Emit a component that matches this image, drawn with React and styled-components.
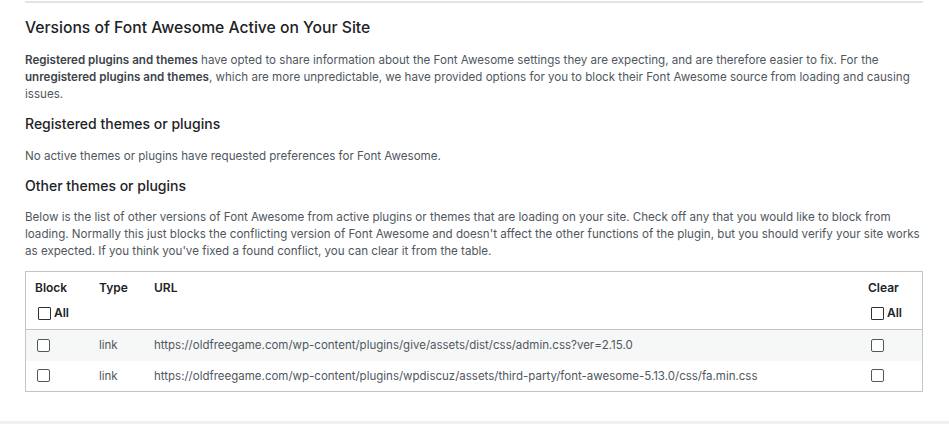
import React from "react";
import styled, { createGlobalStyle } from "styled-components";

const Global = createGlobalStyle`
  html, body { margin: 0; padding: 0; background: #fff; }
  body { font-family: Inter, "Noto Sans", Roboto, sans-serif; color: #50575e; -webkit-font-smoothing: antialiased; }
`;

const Page = styled.div`
  width: 949px;
  height: 424px;
  display: flex;
  flex-direction: column;
  overflow: hidden;
`;

const Section = styled.section`
  height: 421px;
  padding: 0 26px 0 25px;
  box-sizing: border-box;
`;

const Rule = styled.hr`
  margin: 1px 0 0;
  border: 0;
  border-top: 2px solid #e2e4e7;
`;

const Title = styled.h2`
  margin: 13px 0 0;
  font-size: 15.7px;
  line-height: 24px;
  font-weight: 500;
  color: #1d2327;
`;

const Sub = styled.h3`
  margin: ${(p) => p.$mt}px 0 0;
  font-size: 14px;
  line-height: 20px;
  font-weight: 500;
  color: #1d2327;
`;

const Para = styled.p`
  margin: ${(p) => p.$mt}px 0 0;
  font-size: 11.6px;
  line-height: 17px;
  color: #50575e;
  b { font-weight: 600; color: #3c434a; }
`;

const Table = styled.table`
  margin-top: 11px;
  width: 100%;
  border-collapse: collapse;
  border: 1px solid #c3c4c7;
  font-size: 11px;
`;

const Th = styled.th`
  text-align: left;
  vertical-align: top;
  padding: 8px 10px 8px ${(p) => p.$pl || 9}px;
  font-size: 12px;
  font-weight: 600;
  color: #1d2327;
  width: ${(p) => p.$w || "auto"};
  line-height: 16px;
  border-bottom: 1px solid #c3c4c7;
`;

const HeadLabel = styled.div`
  height: 16px;
`;

const AllLabel = styled.label`
  display: flex;
  align-items: center;
  gap: 3px;
  margin-top: 9px;
  padding-left: 3px;
  height: 16px;
`;

const Box = styled.span`
  display: inline-block;
  width: 13px;
  height: 13px;
  box-sizing: border-box;
  border: 1.5px solid ${(p) => (p.$dark ? "#2c3338" : "#50575e")};
  border-radius: ${(p) => (p.$dark ? "1px" : "2px")};
  background: #fff;
`;

const Row = styled.tr`
  background: ${(p) => (p.$alt ? "#f6f7f7" : "#fff")};
`;

const Td = styled.td`
  height: 31px;
  padding: 0 10px 0 9px;
  vertical-align: middle;
  color: #50575e;
  font-size: 11.5px;
  line-height: 14px;
  box-sizing: border-box;
`;

const BoxCell = styled(Td)`
  padding-left: ${(p) => p.$pl}px;
  line-height: 0;
`;

const Footer = styled.div`
  flex: 1;
  background: #f0f0f1;
`;

const rows = [
  "https://oldfreegame.com/wp-content/plugins/give/assets/dist/css/admin.css?ver=2.15.0",
  "https://oldfreegame.com/wp-content/plugins/wpdiscuz/assets/third-party/font-awesome-5.13.0/css/fa.min.css",
];

export default function App() {
  return (
    <Page>
      <Global />
      <Section>
        <Rule />
        <Title>Versions of Font Awesome Active on Your Site</Title>
        <Para $mt={12}>
          <b>Registered plugins and themes</b> have opted to share information about the Font Awesome settings they are expecting, and are therefore easier to fix. For the <b>unregistered plugins and themes</b>, which are more unpredictable, we have provided options for you to block their Font Awesome source from loading and causing issues.
        </Para>
        <Sub $mt={11}>Registered themes or plugins</Sub>
        <Para $mt={14}>No active themes or plugins have requested preferences for Font Awesome.</Para>
        <Sub $mt={11}>Other themes or plugins</Sub>
        <Para $mt={13}>
          Below is the list of other versions of Font Awesome from active plugins or themes that are loading on your site. Check off any that you would like to block from loading. Normally this just blocks the conflicting version of Font Awesome and doesn't affect the other functions of the plugin, but you should verify your site works as expected. If you think you've fixed a found conflict, you can clear it from the table.
        </Para>
        <Table>
          <thead>
            <tr>
              <Th $w="45px">
                <HeadLabel>Block</HeadLabel>
                <AllLabel><Box $dark />All</AllLabel>
              </Th>
              <Th $w="36px">Type</Th>
              <Th>URL</Th>
              <Th $w="44px" $pl={11}>
                <HeadLabel>Clear</HeadLabel>
                <AllLabel><Box $dark />All</AllLabel>
              </Th>
            </tr>
          </thead>
          <tbody>
            {rows.map((u, i) => (
              <Row key={u} $alt={i === 0}>
                <BoxCell $pl={11}><Box /></BoxCell>
                <Td>link</Td>
                <Td>{u}</Td>
                <BoxCell $pl={14}><Box /></BoxCell>
              </Row>
            ))}
          </tbody>
        </Table>
      </Section>
      <Footer />
    </Page>
  );
}
